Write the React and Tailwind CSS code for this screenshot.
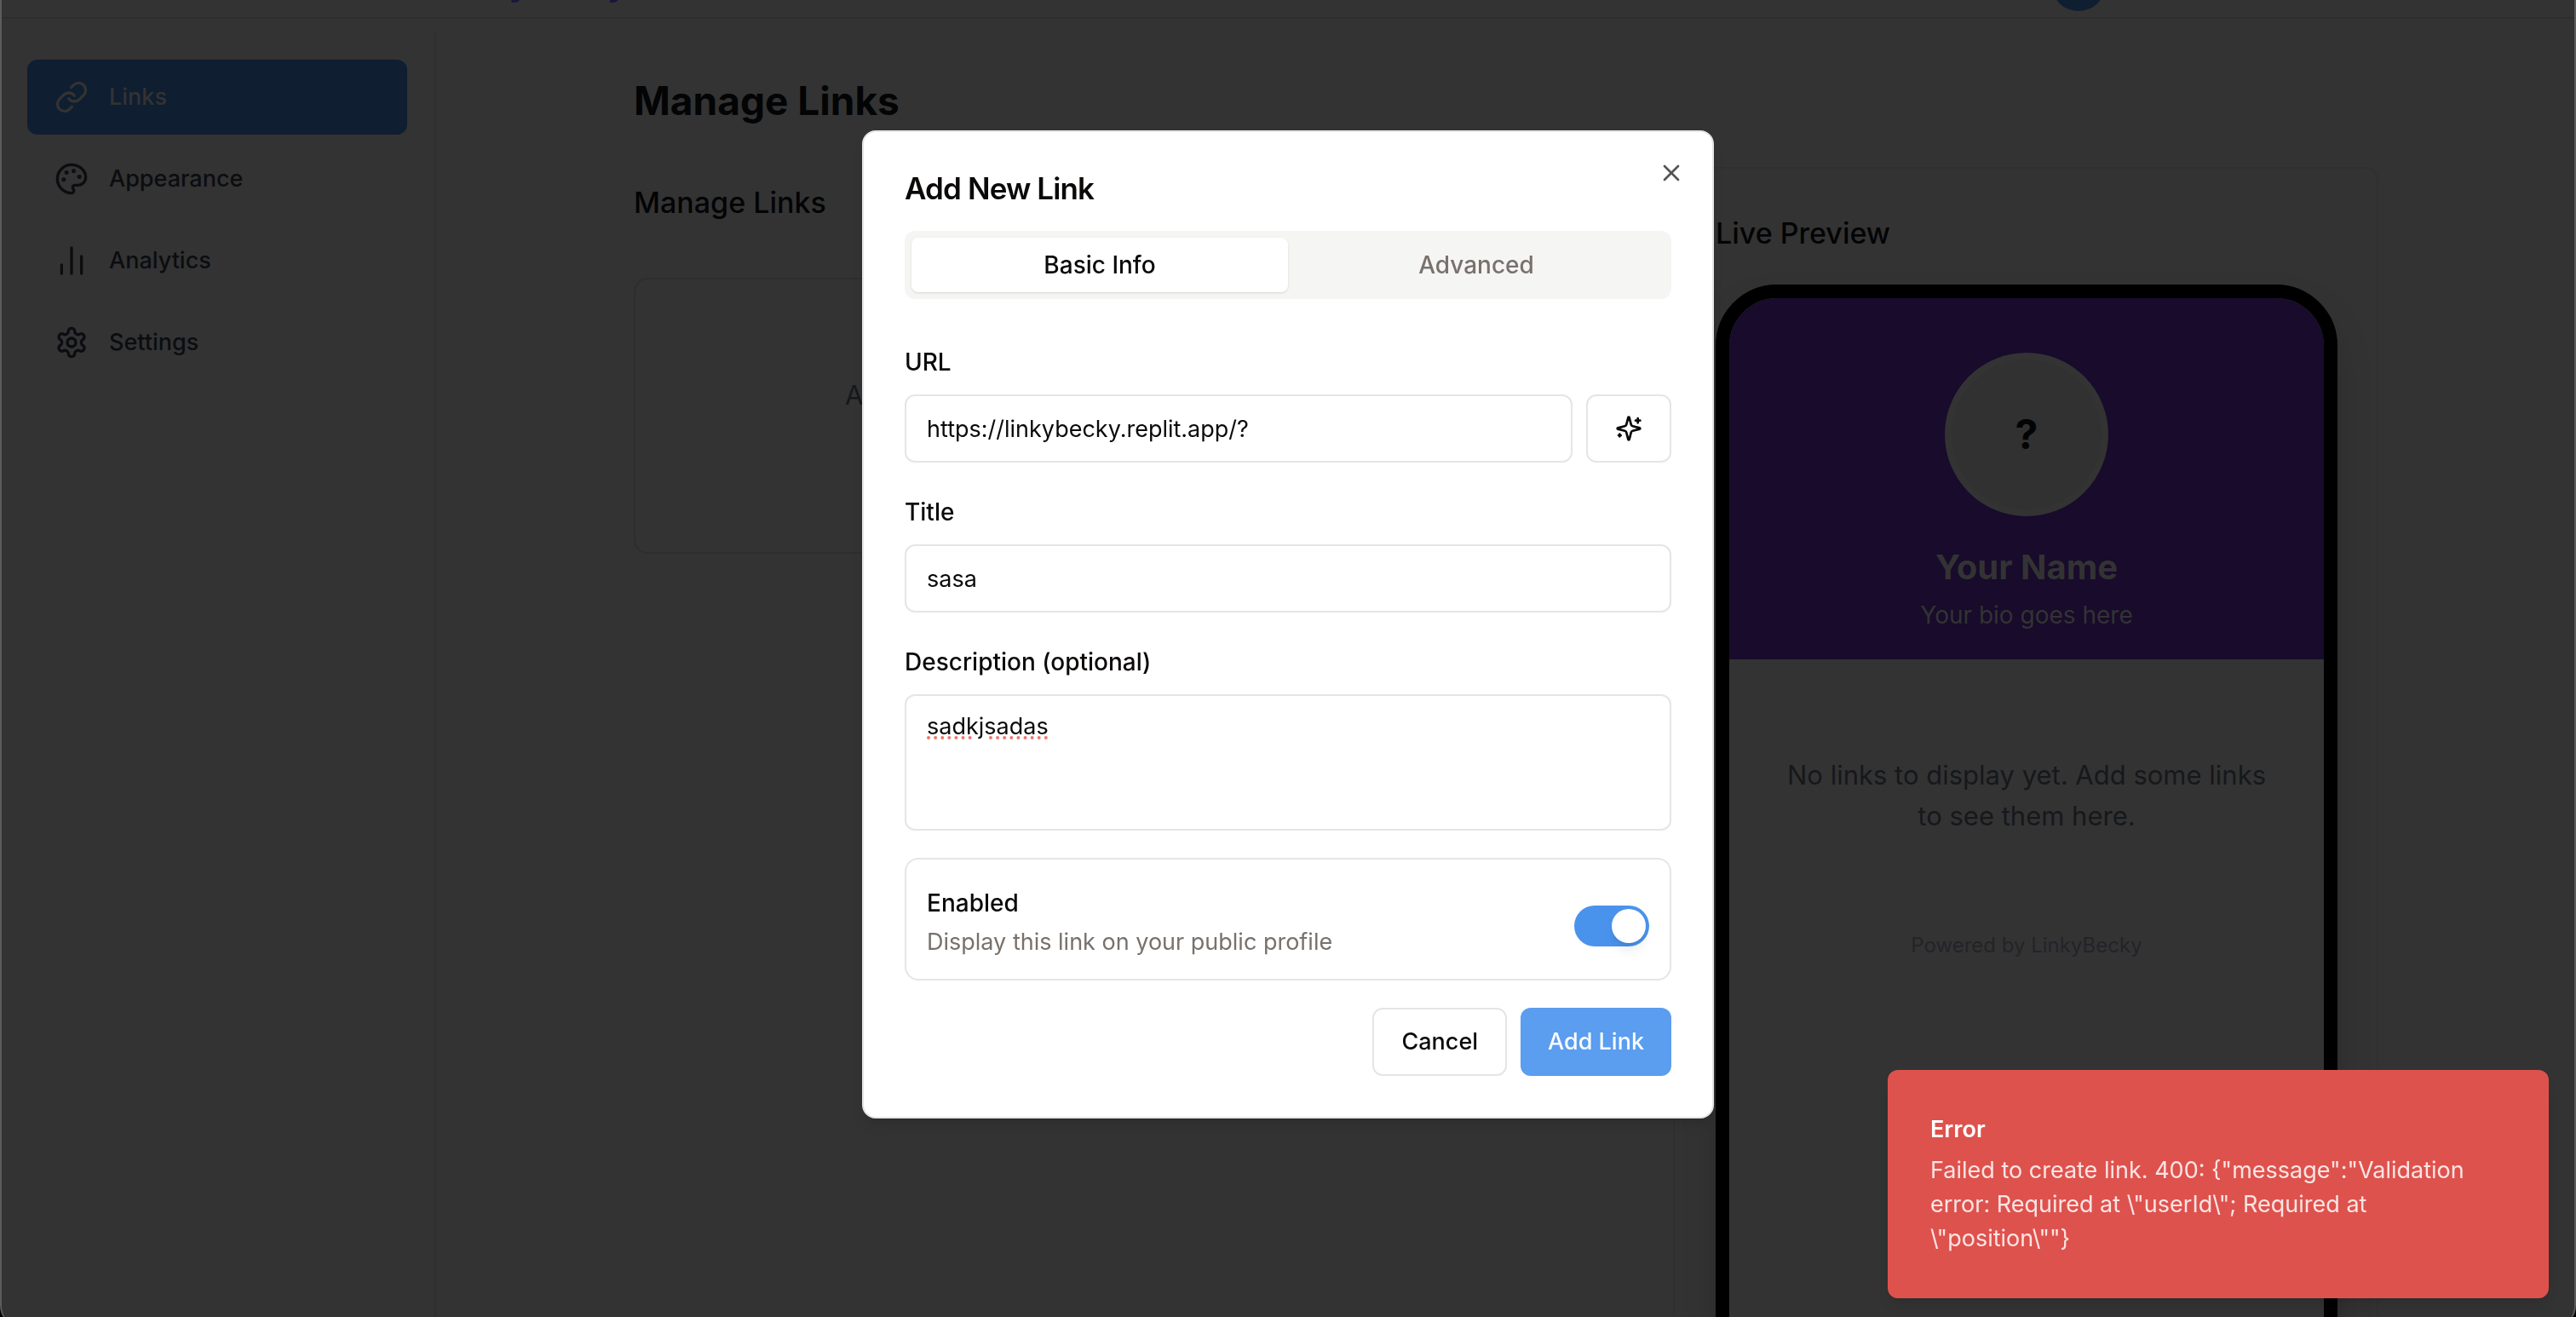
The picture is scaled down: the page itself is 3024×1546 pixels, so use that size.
import { Link, ChartNoAxesColumn, X } from "lucide-react";

function Icon({ className, children }) {
  return (
    <svg
      viewBox="0 0 24 24"
      fill="none"
      stroke="currentColor"
      strokeWidth="2"
      strokeLinecap="round"
      strokeLinejoin="round"
      aria-hidden="true"
      className={className}
    >
      {children}
    </svg>
  );
}

function PaletteIcon({ className }) {
  return (
    <Icon className={className}>
      <circle cx="13.5" cy="6.5" r=".5" fill="currentColor" />
      <circle cx="17.5" cy="10.5" r=".5" fill="currentColor" />
      <circle cx="8.5" cy="7.5" r=".5" fill="currentColor" />
      <circle cx="6.5" cy="12.5" r=".5" fill="currentColor" />
      <path d="M12 2C6.5 2 2 6.5 2 12s4.5 10 10 10c.926 0 1.648-.746 1.648-1.688 0-.437-.18-.835-.437-1.125-.29-.289-.438-.652-.438-1.125a1.64 1.64 0 0 1 1.668-1.668h1.996c3.051 0 5.555-2.503 5.555-5.554C21.965 6.012 17.461 2 12 2z" />
    </Icon>
  );
}

function GearIcon({ className }) {
  return (
    <Icon className={className}>
      <path d="M12.22 2h-.44a2 2 0 0 0-2 2v.18a2 2 0 0 1-1 1.73l-.43.25a2 2 0 0 1-2 0l-.15-.08a2 2 0 0 0-2.73.73l-.22.38a2 2 0 0 0 .73 2.73l.15.1a2 2 0 0 1 1 1.72v.51a2 2 0 0 1-1 1.74l-.15.09a2 2 0 0 0-.73 2.73l.22.38a2 2 0 0 0 2.73.73l.15-.08a2 2 0 0 1 2 0l.43.25a2 2 0 0 1 1 1.73V20a2 2 0 0 0 2 2h.44a2 2 0 0 0 2-2v-.18a2 2 0 0 1 1-1.73l.43-.25a2 2 0 0 1 2 0l.15.08a2 2 0 0 0 2.73-.73l.22-.39a2 2 0 0 0-.73-2.73l-.15-.08a2 2 0 0 1-1-1.74v-.5a2 2 0 0 1 1-1.74l.15-.09a2 2 0 0 0 .73-2.73l-.22-.38a2 2 0 0 0-2.73-.73l-.15.08a2 2 0 0 1-2 0l-.43-.25a2 2 0 0 1-1-1.73V4a2 2 0 0 0-2-2z" />
      <circle cx="12" cy="12" r="3" />
    </Icon>
  );
}

function SparklesIcon({ className }) {
  return (
    <Icon className={className}>
      <path d="M9.937 15.5A2 2 0 0 0 8.5 14.063l-6.135-1.582a.5.5 0 0 1 0-.962L8.5 9.936A2 2 0 0 0 9.937 8.5l1.582-6.135a.5.5 0 0 1 .963 0L14.063 8.5A2 2 0 0 0 15.5 9.937l6.135 1.581a.5.5 0 0 1 0 .964L15.5 14.063a2 2 0 0 0-1.437 1.437l-1.582 6.135a.5.5 0 0 1-.963 0z" />
      <path d="M20 3v4" />
      <path d="M22 5h-4" />
      <path d="M4 17v2" />
      <path d="M5 18H3" />
    </Icon>
  );
}

const navItems = [
  { label: "Links", Glyph: Link, active: true },
  { label: "Appearance", Glyph: PaletteIcon },
  { label: "Analytics", Glyph: ChartNoAxesColumn },
  { label: "Settings", Glyph: GearIcon },
];

function Header() {
  return (
    <header className="-mt-[58px] flex h-20 shrink-0 items-center justify-between border-b-2 border-[#2e2e2e] pl-[520px] pr-[552px]">
      <span className="bg-gradient-to-r from-[#0f1d3a] to-[#1f1040] bg-clip-text text-[38px] font-bold leading-[56px] text-transparent">
        LinkyBecky
      </span>
      <button type="button" aria-label="Account" className="size-16 rounded-full bg-[#0f1e30]" />
    </header>
  );
}

function Sidebar() {
  return (
    <aside className="mt-4 w-[512px] shrink-0 border-r-2 border-[#2e2e2e] px-8 py-8">
      <nav className="flex flex-col gap-2">
        {navItems.map(({ label, Glyph, active }) => (
          <a
            key={label}
            href="#"
            className={
              active
                ? "flex h-[88px] items-center gap-6 rounded-xl bg-[#0f1e30] px-8 text-[27px] font-medium text-[#333333]"
                : "flex h-[88px] items-center gap-6 rounded-xl px-8 text-[27px] font-medium text-[#0b0d10]"
            }
          >
            <Glyph className="size-10" />
            {label}
          </a>
        ))}
      </nav>
    </aside>
  );
}

function Phone() {
  return (
    <div className="mt-8 flex h-[1300px] flex-col overflow-hidden rounded-[72px] border-[16px] border-black bg-[#333333] text-center shadow-2xl">
      <div className="flex flex-col items-center bg-[#180b2b] pb-8 pt-16 text-[#333333]">
        <div className="flex size-48 items-center justify-center rounded-full border-8 border-[#333333] bg-[#313131] text-[48px] font-bold text-[#030405]">
          ?
        </div>
        <h3 className="mt-8 text-[40px] font-bold leading-[56px]">Your Name</h3>
        <p className="mt-2 text-[28px] leading-10">Your bio goes here</p>
      </div>
      <p className="px-16 pt-28 text-[31px] leading-[48px] text-[#16181b]">
        No links to display yet. Add some links to see them here.
      </p>
      <p className="mt-28 text-[24px] leading-8 text-[#222428]">Powered by LinkyBecky</p>
    </div>
  );
}

function Page() {
  return (
    <div className="flex h-full flex-col" aria-hidden="true">
      <Header />
      <div className="flex min-h-0 grow">
        <Sidebar />
        <main className="grow pt-[60px]">
          <div className="mx-auto max-w-[2048px]">
            <h1 className="text-[46px] font-bold leading-[72px] text-[#030405]">Manage Links</h1>
            <div className="mt-[42px] flex justify-between gap-16">
              <section className="grow">
                <h2 className="mt-3.5 text-[34px] font-medium leading-[56px] text-[#030405]">Manage Links</h2>
                <div className="mt-[60px] h-[324px] rounded-2xl border-2 border-[#2e2e2e] pl-[246px] pt-28 text-[31px] leading-[48px] text-[#16181b]">
                  Add your first link to get started
                </div>
              </section>
              <section className="w-[828px] shrink-0 rounded-2xl border-2 border-[#303030] py-12 pl-12 pr-[46px]">
                <h2 className="text-[34px] font-medium leading-[56px] text-[#030405]">Live Preview</h2>
                <Phone />
              </section>
            </div>
          </div>
        </main>
      </div>
    </div>
  );
}

function Dialog() {
  return (
    <div
      role="dialog"
      aria-labelledby="dialog-title"
      className="fixed left-1/2 top-[153px] w-[1000px] -translate-x-1/2 rounded-2xl border-2 border-[#e5e5e5] bg-white p-12 text-[27px] text-[#0c0a09] shadow-lg"
    >
      <h2 id="dialog-title" className="text-[35px] font-semibold leading-9 tracking-tight">
        Add New Link
      </h2>
      <button type="button" aria-label="Close" className="absolute right-8 top-8 text-[#555555]">
        <X className="size-8" />
      </button>

      <div role="tablist" className="mt-8 grid h-20 grid-cols-2 rounded-xl bg-[#f5f5f4] p-2 text-[28px] font-medium">
        <button type="button" role="tab" aria-selected="true" className="rounded-lg bg-white shadow-sm">
          Basic Info
        </button>
        <button type="button" role="tab" aria-selected="false" className="text-[#78716c]">
          Advanced
        </button>
      </div>

      <form className="mt-[60px]">
        <label htmlFor="url" className="block text-[28px] font-medium leading-7">
          URL
        </label>
        <div className="mt-6 flex gap-4">
          <input id="url" defaultValue="https://linkybecky.replit.app/?" className="h-20 min-w-0 grow rounded-xl border-2 border-[#e5e5e5] px-6" />
          <button type="button" aria-label="Suggest details" className="flex w-[100px] items-center justify-center rounded-xl border-2 border-[#e5e5e5]">
            <SparklesIcon className="size-8" />
          </button>
        </div>

        <label htmlFor="title" className="mt-11 block text-[28px] font-medium leading-7">
          Title
        </label>
        <input id="title" defaultValue="sasa" className="mt-6 h-20 w-full rounded-xl border-2 border-[#e5e5e5] px-6" />

        <label htmlFor="description" className="mt-11 block text-[28px] font-medium leading-7">
          Description (optional)
        </label>
        <textarea
          id="description"
          spellCheck={false}
          defaultValue="sadkjsadas"
          className="mt-6 block h-40 w-full resize-none rounded-xl border-2 border-[#e5e5e5] px-6 py-4 leading-10 underline decoration-[#f0776f] decoration-dotted decoration-4 underline-offset-2"
        />

        <div className="mt-8 flex h-36 items-center justify-between rounded-2xl border-2 border-[#e5e5e5] px-6 pt-2">
          <div>
            <label htmlFor="enabled" className="block text-[28px] font-medium leading-10">
              Enabled
            </label>
            <p className="mt-1.5 leading-10 text-[#78716c]">Display this link on your public profile</p>
          </div>
          <span className="relative mt-2 flex">
            <input id="enabled" type="checkbox" role="switch" defaultChecked className="h-12 w-[88px] appearance-none rounded-full bg-[#4a93ec]" />
            <span className="pointer-events-none absolute right-1 top-1 size-10 rounded-full bg-white shadow-lg" />
          </span>
        </div>

        <div className="mt-8 flex justify-end gap-4 font-medium">
          <button type="button" className="h-20 rounded-xl border-2 border-[#e5e5e5] px-8">
            Cancel
          </button>
          <button type="button" className="h-20 rounded-xl bg-[#5b9dee] px-8 text-[#f7fbff]">
            Add Link
          </button>
        </div>
      </form>
    </div>
  );
}

function Toast() {
  return (
    <div role="alert" className="fixed bottom-[22px] right-8 w-[776px] rounded-xl bg-[#de524d] py-[50px] pl-[50px] pr-20 text-[27px] leading-10 shadow-lg">
      <p className="font-semibold text-white">Error</p>
      <p className="mt-2 text-[#fbe4e3]">
        {'Failed to create link. 400: {"message":"Validation error: Required at \\"userId\\"; Required at \\"position\\""}'}
      </p>
    </div>
  );
}

export default function App() {
  return (
    <div className="h-screen overflow-hidden bg-black font-['Inter',sans-serif]">
      <div className="relative h-[calc(100%+11px)] overflow-hidden rounded-b-3xl bg-[#333333]">
        <Page />
        <div className="pointer-events-none absolute inset-0 rounded-b-3xl border-x-2 border-[#5c5c5c]" />
      </div>
      <Dialog />
      <Toast />
    </div>
  );
}
